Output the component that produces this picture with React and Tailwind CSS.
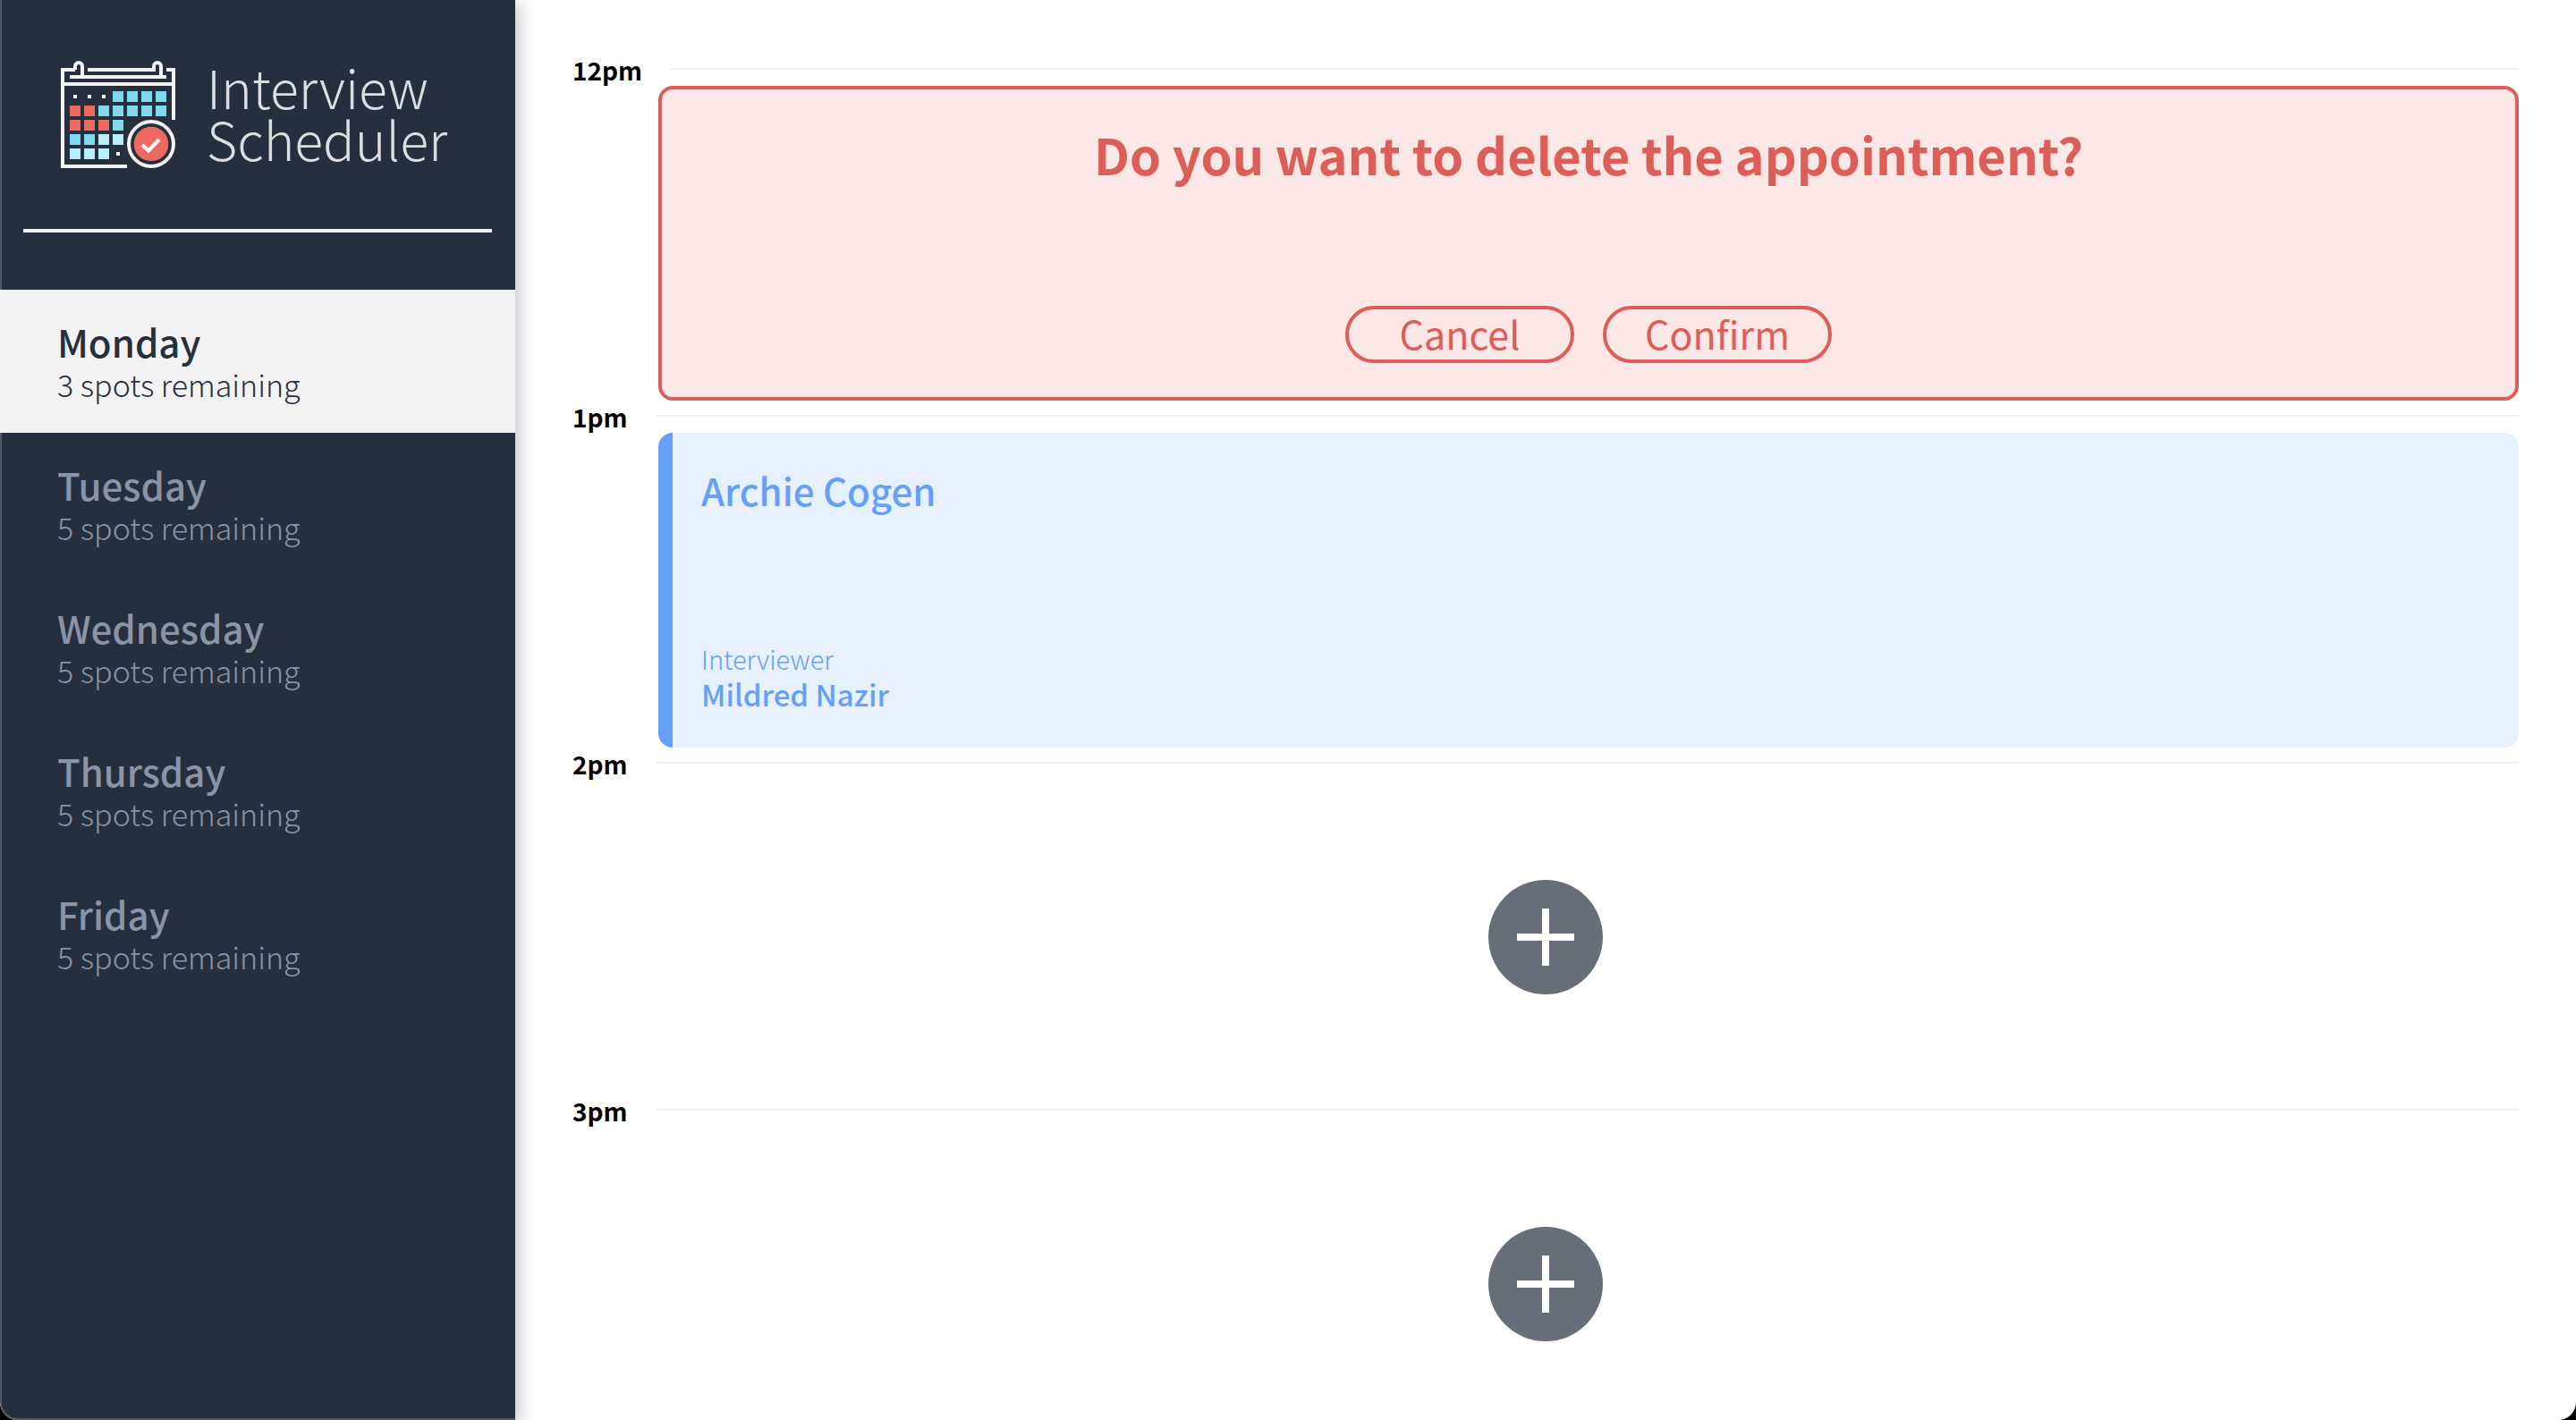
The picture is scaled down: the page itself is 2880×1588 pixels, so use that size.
import React from "react";

const DAYS = [
  { name: "Monday", spots: 3 },
  { name: "Tuesday", spots: 5 },
  { name: "Wednesday", spots: 5 },
  { name: "Thursday", spots: 5 },
  { name: "Friday", spots: 5 },
];

// Calendar cells: b = blue, r = red, l = light blue, . = dot, _ = empty
const CELLS = ["...bbbb", "rrbbbbb", "rrrb___", "bbll___", "lll.___"];
const CELL_FILL = { b: "#7edaf0", r: "#ed6a61", l: "#b8eefa" };

function CalendarIcon() {
  return (
    <svg viewBox="68 68 128 120" className="h-[120px] w-32 shrink-0" aria-hidden="true">
      <g fill="none" stroke="#f2f2f2" strokeWidth="4">
        <path d="M84 78H70V186H142" />
        <path d="M84 78V74a4 4 0 0 1 8 0V86" />
        <path d="M98 78H172V74a4 4 0 0 1 8 0V86" />
        <path d="M78 86H186" />
        <path d="M70 94H194" />
        <path d="M186 78H194V134" />
        <circle cx="169" cy="161" r="25" />
      </g>
      <circle cx="169" cy="161" r="19.3" fill="#ed6a61" />
      <path d="M159 162L166 168.500L178 156" fill="none" stroke="#fff" strokeWidth="4" />
      {CELLS.map((row, y) =>
        [...row].map((c, x) => {
          if (c === "_") return null;
          const key = `${x}-${y}`;
          if (c === ".")
            return <rect key={key} x={82 + x * 16} y={106 + y * 16} width="4" height="4" fill="#f2f2f2" />;
          return (
            <rect key={key} x={78 + x * 16} y={102 + y * 16} width="12" height="12" fill={CELL_FILL[c]} />
          );
        })
      )}
    </svg>
  );
}

function Sidebar() {
  return (
    <aside className="relative w-1/5 shrink-0 rounded-bl-[20px] bg-[#262f3e] shadow-[4px_4px_20px_rgba(38,47,62,0.3)] after:pointer-events-none after:absolute after:inset-0 after:rounded-bl-[20px] after:border-b-2 after:border-l-2 after:border-white/20">
      <div className="flex h-64 items-start gap-[35px] pt-[68px] pl-[68px]">
        <CalendarIcon />
        <p className="text-[59px] leading-[58px] font-light text-[#dcdee0]">
          Interview
          <br />
          Scheduler
        </p>
      </div>
      <hr className="mx-[26px] mb-16 h-1 border-0 bg-[#f2f2f2]" />
      <nav>
        <ul>
          {DAYS.map((day, i) => (
            <li key={day.name}>
              <button
                type="button"
                className={
                  "flex h-40 w-full flex-col justify-center px-16 pt-1 text-left " +
                  (i === 0 ? "bg-[#f2f2f2] text-[#262f3e]" : "text-[#8995a7]")
                }
              >
                <span className="text-[42px] leading-[48px] font-medium">{day.name}</span>
                <span className="text-[34px] leading-[48px] font-light">{day.spots} spots remaining</span>
              </button>
            </li>
          ))}
        </ul>
      </nav>
    </aside>
  );
}

function Slot({ time, children }) {
  return (
    <article>
      <header className="flex h-9 items-start gap-8">
        <h2 className="text-[28px] leading-9 font-bold text-black">{time}</h2>
        <hr className="mt-4 h-0.5 grow border-0 bg-[#f2f2f2]" />
      </header>
      <div className="h-[352px]">{children}</div>
    </article>
  );
}

function ConfirmCard() {
  const button =
    "h-16 w-64 rounded-full border-4 border-[#dd5e58] pb-1 text-[43px] leading-[48px] font-normal";
  return (
    <section className="ml-24 flex h-full flex-col items-center justify-between rounded-2xl border-4 border-[#dd5e58] bg-[#fae7e6] pt-10 pb-[38px] text-[#dd5e58]">
      <h1 className="text-[56px] leading-[64px] font-bold">Do you want to delete the appointment?</h1>
      <div className="flex gap-8">
        <button type="button" className={button}>Cancel</button>
        <button type="button" className={button}>Confirm</button>
      </div>
    </section>
  );
}

function AppointmentCard() {
  return (
    <section className="ml-24 flex h-full flex-col justify-between rounded-2xl border-l-16 border-[#659ff8] bg-[#e7f0fd] px-8 py-10 text-[#659ff8]">
      <h3 className="text-[42px] leading-[48px] font-medium">Archie Cogen</h3>
      <div>
        <h4 className="text-[29px] leading-10 font-light">Interviewer</h4>
        <p className="text-[33px] leading-10 font-medium">Mildred Nazir</p>
      </div>
    </section>
  );
}

function AddSlot() {
  return (
    <div className="flex h-full items-center justify-center">
      <button type="button" aria-label="Add appointment" className="rounded-full">
        <svg viewBox="0 0 128 128" className="size-32">
          <circle cx="64" cy="64" r="64" fill="#686e79" />
          <path d="M64 32V96M32 64H96" stroke="#fff" strokeWidth="8" />
        </svg>
      </button>
    </div>
  );
}

export default function App() {
  return (
    <div className="h-screen bg-black font-['Noto_Sans_CJK_SC','Noto_Sans',sans-serif]">
      <div className="flex h-full overflow-hidden rounded-b-[20px] bg-white">
        <Sidebar />
        <main className="grow overflow-hidden px-16 pt-[60px]">
          <Slot time="12pm"><ConfirmCard /></Slot>
          <Slot time="1pm"><AppointmentCard /></Slot>
          <Slot time="2pm"><AddSlot /></Slot>
          <Slot time="3pm"><AddSlot /></Slot>
        </main>
      </div>
    </div>
  );
}
